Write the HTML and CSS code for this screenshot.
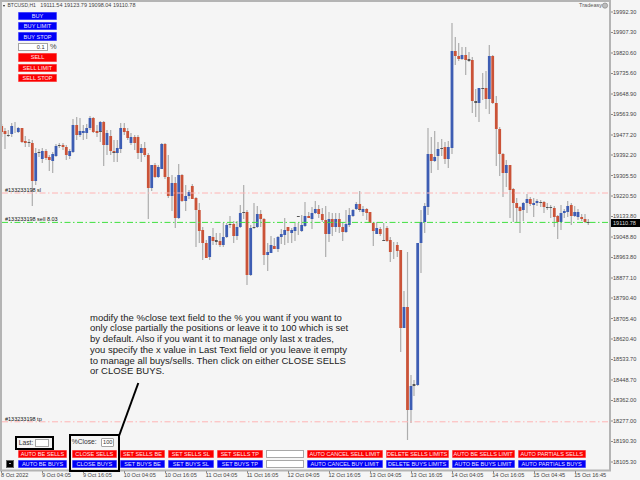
FILE: index.html
```html
<!DOCTYPE html>
<html lang="en">
<head>
<meta charset="utf-8">
<title>BTCUSD,H1</title>
<link rel="stylesheet" href="styles.css">
</head>
<body>
<main class="stage">
  <svg class="chart" viewBox="0 0 640 480" width="640" height="480" aria-hidden="true">
    <path class="wicks" d="M1.7 124V137M5 128V149M8.3 130V137M11.7 123V137M15 122V133M18.3 127V133M22 128V143M25.3 136V147M29 139V147M32.3 140V206M35.7 148V185M39 149V157M42.3 148V163M46 149V160M49.3 155V171M52.7 152V173M56 144V157M59.3 143V148M63 143V150M66.3 145V160M69.7 149V159M73 119V153M76.7 117V140M80 118V137M83.3 125V140M86.7 124V139M90 116V130M93.3 117V133M97 125V137M100.3 121V142M103.7 121V166M107 130V155M110.7 130V155M114 140V162M117.3 140V162M120.7 123V153M124.3 123V135M127.7 128V140M131 133V145M134.7 135V150M138 135V159M141.3 144V162M144.7 142V157M148.3 153V219M151.7 165V191M155 163V178M158.3 165V178M161.7 143V169M165 143V179M168.3 155V198M172 175V211M175.3 177V228M178.7 164V219M182 174V202M185.7 185V211M189 190V199M192.3 184V199M196 197V247M199.3 203V243M202.7 227V260M206.3 240V258M209.7 240V260M213 228V245M216.3 233V245M220 233V247M223.3 223V247M226.7 223V238M230 216V228M233.7 221V243M237 221V240M240.3 205V228M243.7 185V219M247 210V285M250.7 225V276M254 203V229M257.3 206V228M260.7 210V227M264 218V265M267.7 243V271M271 236V253M274.3 238V249M278 236V252M281.3 229V244M284.7 218V245M288 230V243M291.7 228V243M295 223V241M298.3 223V235M301.7 215V232M305 202V227M308.7 212V218M312 207V229M315.3 201V214M318.7 205V218M322.3 208V222M325.7 206V257M329 212V242M332.3 213V236M335.7 213V232M339.3 213V233M342.7 222V241M346 210V233M349.3 208V227M353 209V217M356.3 202V210M359.7 191V212M363 206V216M366.7 208V220M370 212V223M373.3 222V246M376.7 222V232M380.3 227V236M383.7 223V240M387 226V242M390.3 237V262M393.7 242V259M397.3 242V257M400.7 250V352M404 291V328M407.5 252V440M411 375V423M414 380V396M417.7 243V386M421 210V273M424.7 203V233M428 128V215M431.3 137V173M434.7 131V162M438 142V170M441.7 139V156M445 142V164M448.3 141V168M452 23V154M455.3 37V65M458.7 43V61M462 47V60M465.7 47V75M469 52V62M472.3 57V113M475.7 89V117M479 88V122M482.7 73V100M486 71V109M489.3 45V114M492.7 55V104M496.3 96V166M499.7 127V176M503 153V197M506.3 160V187M510 165V218M513.3 188V222M516.7 198V222M520 206V233M523.3 202V221M527 194V213M530.3 197V206M533.7 198V217M537 199V206M540.7 200V207M544 201V213M547.3 203V210M550.7 205V218M554.3 206V227M557.7 215V239M561 205V230M564.3 209V218M567.7 201V217M571.3 203V225M574.7 206V217M578 209V220M581.7 214V221M585 214V223M588.3 219V225"/>
    <path class="bull" d="M11.7 126V134M18.3 128V132M35.7 153V181M42.3 151V159M52.7 154V161M56 146V156M69.7 151V156M73 125V152M80 131V135M83.3 131V133M86.7 128V133M90 118V128M100.3 122V132M107 133V145M117.3 148V153M120.7 128V149M131 137V143M141.3 148V153M151.7 165V188M158.3 167V177M161.7 144V169M172 183V196M178.7 175V218M185.7 196V201M189 192V196M209.7 236V257M223.3 237V245M226.7 225V237M237 227V236M240.3 213V227M250.7 228V275M257.3 214V227M267.7 252V255M271 245V253M278 237V249M281.3 234V237M284.7 230V235M291.7 230V233M295 227V231M301.7 225V231M305 216V226M312 213V219M315.3 209V213M329 219V234M335.7 219V227M346 224V232M349.3 215V225M353 210V216M356.3 204V209M363 209V212M376.7 228V234M404 307V328M411 386V410M417.7 243V385M421 222V243M424.7 206V222M428 154V207M434.7 157V161M438 149V156M448.3 147V159M452 51V148M462 55V59M479 88V103M489.3 56V99M506.3 165V173M523.3 203V210M527 199V203M533.7 203V205M537 201V203M561 213V222M564.3 211V213M567.7 206V212M574.7 212V216M578 212V217"/>
    <path class="bear" d="M1.7 126V132M5 131V134M22 128V142M25.3 141V143M32.3 143V181M46 151V158M49.3 157V160M63 145V147M66.3 147V155M76.7 125V135M93.3 118V132M97 131V133M103.7 122V145M110.7 136V151M114 151V153M124.3 128V132M127.7 131V138M134.7 137V143M138 137V153M144.7 148V155M148.3 155V188M155 165V177M165 144V177M168.3 177V196M175.3 183V218M182 175V201M192.3 186V199M196 198V210M199.3 210V231M202.7 230V243M206.3 243V258M213 237V241M220 241V245M233.7 224V236M247 212V275M260.7 214V219M264 219V255M274.3 246V249M288 227V231M308.7 216V218M318.7 209V214M322.3 214V220M325.7 220V234M332.3 219V227M339.3 219V227M342.7 227V232M359.7 204V210M366.7 209V213M370 212V223M373.3 223V231M380.3 229V234M387 228V241M390.3 240V252M397.3 245V251M400.7 250V328M407.5 307V410M431.3 154V161M445 147V159M455.3 51V56M458.7 56V59M465.7 55V60M472.3 60V101M486 88V99M492.7 56V103M496.3 103V129M499.7 129V154M503 154V173M510 165V190M513.3 189V203M516.7 203V208M520 207V211M530.3 199V204M544 202V207M554.3 208V217M557.7 216V222M571.3 205V216M581.7 217V219M585 219V222"/>
    <path class="doji" d="M8.3 135V136M29 142V143M39 152V153M59.3 145V146M100.3 131V132M114 152V153M216.3 240V242M230 224V225M243.7 212V213M254 227V228M298.3 216V217M359.7 209V210M383.7 240V241M414 384V386M441.7 148V149M469 59V61M475.7 101V103M482.7 88V89M540.7 202V203M547.3 207V208M550.7 207V208M588.3 222V223"/>
    <line class="level-red" x1="2" y1="193" x2="609" y2="193"/>
    <line class="level-green" x1="2" y1="222.4" x2="609" y2="222.4"/>
    <line class="level-red" x1="2" y1="421.8" x2="609" y2="421.8"/>
    <path class="frame" d="M1 470.5V1H610V470.5H0"/>
    <path class="ticks" d="M1.5 471V473M42.5 471V473M83.5 471V473M124.5 471V473M165.5 471V473M206.5 471V473M247.5 471V473M288.5 471V473M329.5 471V473M370.5 471V473M411.5 471V473M452.5 471V473M493.5 471V473M534.5 471V473M575.5 471V473M611 12h2M611 32.5h2M611 53h2M611 73.5h2M611 94h2M611 114.5h2M611 135h2M611 155h2M611 175.5h2M611 196h2M611 216.5h2M611 237h2M611 257.5h2M611 278h2M611 298h2M611 318.5h2M611 339h2M611 359.5h2M611 380h2M611 400.5h2M611 421h2M611 441.5h2M611 462h2"/>
    <line class="callout" x1="119" y1="436" x2="138.3" y2="383"/>
    <circle class="brand-icon" cx="605" cy="5.6" r="2.6"/>
  </svg>

  <header class="title-bar">
    <span class="caret"></span>
    <span class="symbol">BTCUSD,H1</span>
    <span>19111.54 19123.79 19098.04 19110.78</span>
  </header>
  <span class="brand">Tradeasy</span>

  <nav class="side-panel">
    <button class="btn buy">BUY</button>
    <button class="btn buy">BUY LIMIT</button>
    <button class="btn buy">BUY STOP</button>
    <div class="lot-row"><span class="field lot">0.1</span><span class="pct">%</span></div>
    <button class="btn sell">SELL</button>
    <button class="btn sell">SELL LIMIT</button>
    <button class="btn sell">SELL STOP</button>
  </nav>

  <span class="order-tag tag-sl">#133233198 sl</span>
  <span class="order-tag tag-sell">#133233198 sell 8.03</span>
  <span class="order-tag tag-tp">#133233198 tp</span>

  <div class="price-axis">
    <span>19992.30</span><span>19907.30</span><span>19820.60</span><span>19735.60</span><span>19648.90</span><span>19563.90</span><span>19477.20</span><span>19392.20</span><span>19305.50</span><span>19220.50</span><span>19133.80</span><span>19048.80</span><span>18963.80</span><span>18877.10</span><span>18790.40</span><span>18705.40</span><span>18620.40</span><span>18533.70</span><span>18448.70</span><span>18362.00</span><span>18277.00</span><span>18190.30</span><span>18105.30</span>
  </div>
  <span class="price-now">19110.78</span>

  <div class="date-axis">
    <span>8 Oct 2022</span><span>9 Oct 04:05</span><span>9 Oct 16:05</span><span>10 Oct 04:05</span><span>10 Oct 16:05</span><span>11 Oct 04:05</span><span>11 Oct 16:05</span><span>12 Oct 04:05</span><span>12 Oct 16:05</span><span>13 Oct 04:05</span><span>13 Oct 16:05</span><span>14 Oct 04:05</span><span>14 Oct 16:05</span><span>15 Oct 04:45</span><span>15 Oct 16:45</span>
  </div>

  <p class="note">modify the %close text field to the % you want if you want to only close partially the positions or leave it to 100 which is set by default. Also if you want it to manage only last x trades, you specify the x value in Last Text field or you leave it empty to manage all buys/sells. Then click on either CLOSE SELLS or CLOSE BUYS.</p>

  <div class="last-box"><span>Last:</span><span class="field last-field"></span></div>
  <div class="close-box"><span>%Close:</span><span class="field close-field">100</span></div>

  <div class="action-grid">
    <button class="btn sell first">AUTO BE SELLS</button>
    <button class="btn sell">CLOSE SELLS</button>
    <button class="btn sell">SET SELLS BE</button>
    <button class="btn sell">SET SELLS SL</button>
    <button class="btn sell">SET SELLS TP</button>
    <span class="blank"></span>
    <button class="btn sell">AUTO CANCEL SELL LIMIT</button>
    <button class="btn sell">DELETE SELLS LIMITS</button>
    <button class="btn sell">AUTO BE SELLS LIMIT</button>
    <button class="btn sell">AUTO PARTIALS SELLS</button>
    <button class="btn buy first">AUTO BE BUYS</button>
    <button class="btn buy">CLOSE BUYS</button>
    <button class="btn buy">SET BUYS BE</button>
    <button class="btn buy">SET BUYS SL</button>
    <button class="btn buy">SET BUYS TP</button>
    <span class="blank"></span>
    <button class="btn buy">AUTO CANCEL BUY LIMIT</button>
    <button class="btn buy">DELETE BUYS LIMITS</button>
    <button class="btn buy">AUTO BE BUYS LIMIT</button>
    <button class="btn buy">AUTO PARTIALS BUYS</button>
  </div>
  <span class="mini-toggle"><span class="mini-dash"></span></span>
</main>
</body>
</html>
```
FILE: styles.css
```css
* { box-sizing: border-box; }
html, body { margin: 0; padding: 0; }
body { background: #f5f5f5; font-family: "Liberation Sans", Arial, sans-serif; }
.stage { position: relative; width: 640px; height: 480px; overflow: hidden; background: #f5f5f5; color: #333; }
.chart { position: absolute; left: 0; top: 0; }
.wicks { stroke: #adadad; stroke-width: 1.2; fill: none; }
.bull { stroke: #3d5db3; stroke-width: 2.8; fill: none; }
.bear { stroke: #ca5338; stroke-width: 2.8; fill: none; }
.doji { stroke: #555; stroke-width: 2.8; fill: none; }
.level-red { stroke: #ffb4b4; stroke-width: 1; stroke-dasharray: 6 2.5 1.5 2.5; }
.level-green { stroke: #3fe03f; stroke-width: 1; stroke-dasharray: 6 2.5 1.5 2.5; }
.frame { stroke: #b4b4b4; stroke-width: 2; fill: none; }
.ticks { stroke: #8c8c8c; stroke-width: 1; fill: none; }
.callout { stroke: #000; stroke-width: 2; }
.brand-icon { fill: #bdbdbd; stroke: #8f8f8f; stroke-width: 0.8; }

.title-bar { position: absolute; left: 3px; top: 1px; height: 9px; display: flex; align-items: center; gap: 4.5px; font-size: 5.5px; line-height: 9px; color: #444; white-space: nowrap; }
.caret { width: 0; height: 0; margin-right: -2px; border-left: 1.8px solid transparent; border-right: 1.8px solid transparent; border-top: 2.6px solid #222; }
.symbol { font-size: 5px; }
.brand { position: absolute; left: 579px; top: 1px; font-size: 5.6px; line-height: 9px; color: #555; }

.btn { display: block; width: 100%; margin: 0; padding: 0; height: 8.4px; border: 0; box-shadow: inset 0 0 0 0.6px rgba(255, 255, 255, 0.55); font: 5.6px/6px "Liberation Sans", Arial, sans-serif; text-align: center; white-space: nowrap; overflow: hidden; }
.buy { background: #0000f6; color: #e4e4ff; }
.sell { background: #fb0000; color: #ffe8e8; }

.side-panel { position: absolute; left: 18px; top: 11.7px; width: 39px; display: flex; flex-direction: column; gap: 2px; }
.lot-row { display: flex; align-items: center; height: 8.4px; gap: 2px; }
.field { display: block; background: #fff; border: 1px solid #a4a4a4; font-size: 5.6px; line-height: 6.5px; color: #333; }
.lot { width: 30px; height: 8.4px; text-align: right; padding-right: 2.5px; }
.pct { font-size: 7.4px; line-height: 8px; color: #444; }

.order-tag { position: absolute; left: 5px; font-size: 5.5px; line-height: 8px; color: #111; white-space: nowrap; }
.tag-sl { top: 186px; }
.tag-sell { top: 215px; }
.tag-tp { top: 415px; }

.price-axis { position: absolute; left: 613px; top: 8px; display: flex; flex-direction: column; }
.price-axis span { height: 20.45px; font-size: 5.6px; line-height: 8px; color: #444; white-space: nowrap; }
.price-now { position: absolute; left: 610.5px; top: 218.5px; width: 29.5px; height: 8px; background: #000; color: #ddd; font-size: 5.6px; line-height: 8px; padding-left: 2.5px; }

.date-axis { position: absolute; left: 1px; top: 471px; display: flex; }
.date-axis span { flex: 0 0 40.95px; font-size: 5.6px; line-height: 8px; color: #444; white-space: nowrap; }

.note { position: absolute; left: 90px; top: 312.5px; width: 260px; margin: 0; font-size: 9.5px; line-height: 10.8px; color: #222; }

.last-box { position: absolute; left: 15px; top: 436px; width: 38.5px; height: 13.5px; border: 2px solid #000; display: flex; align-items: center; gap: 2.2px; padding-left: 1.8px; font-size: 6.7px; color: #333; }
.last-field { width: 13.5px; height: 7.5px; }
.close-box { position: absolute; left: 69px; top: 434px; width: 51px; height: 38px; border: 2px solid #000; display: flex; align-items: flex-start; gap: 4.5px; padding: 2.3px 0 0 0.8px; font-size: 6.7px; line-height: 8.4px; color: #333; }
.close-field { width: 13px; height: 8.4px; text-align: center; border-radius: 1px; }

.action-grid { position: absolute; left: 18px; top: 449.7px; display: grid; grid-template-rows: 8px 8px; grid-template-columns: 50.7px 45.3px 45px 45.7px 46.3px 37.7px 76px 63px 63px 68px; column-gap: 3px; row-gap: 2px; }
.action-grid .btn { height: 8px; }
.action-grid .first { width: 49px; }
.blank { display: block; background: #fff; border: 1px solid #a8a8a8; }
.mini-toggle { position: absolute; left: 6px; top: 460px; width: 7.5px; height: 7.8px; background: #000; border: 1px solid #666; display: flex; align-items: center; justify-content: center; }
.mini-dash { width: 2px; height: 1px; background: #aaa; }
```
